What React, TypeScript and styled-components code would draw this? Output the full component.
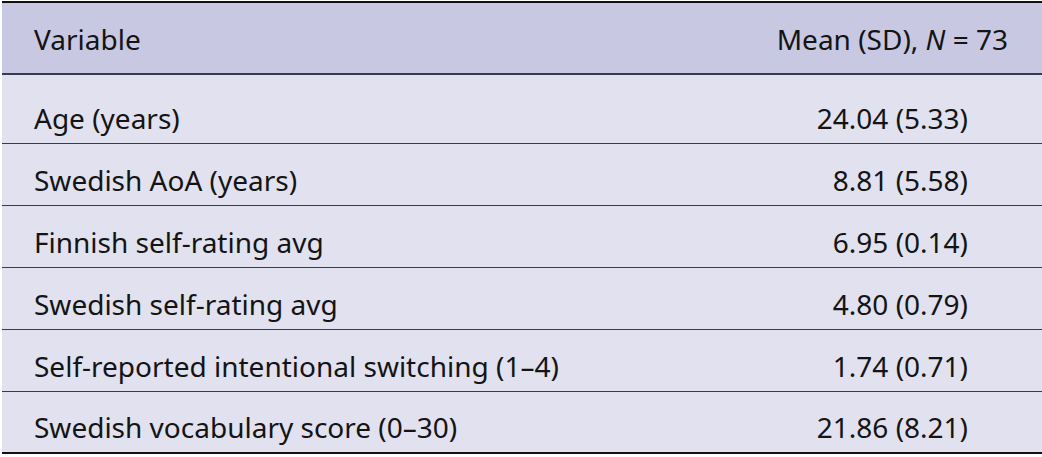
import React from "react";
import styled, { createGlobalStyle } from "styled-components";

const Global = createGlobalStyle`
  html, body { margin: 0; padding: 0; background: #ffffff; }
  body { font-family: "Noto Sans", "Open Sans", sans-serif; }
`;

const Wrap = styled.div`
  padding: 1px 0 0 2px;
`;

const Table = styled.table`
  width: 1040px;
  border-collapse: collapse;
  border-top: 2px solid #111111;
  border-bottom: 2px solid #111111;
  font-family: "Noto Sans", "Open Sans", sans-serif;
  font-size: 28px;
  color: #141414;
`;

const HeadRow = styled.tr`
  background: #c8c8e2;
  border-bottom: 2px solid #3a3a4c;
  height: 72px;
`;

const BodyRow = styled.tr<{ $first?: boolean }>`
  background: #e1e1ef;
  border-top: ${(p) => (p.$first ? "none" : "1px solid #3a3a48")};
  height: ${(p) => (p.$first ? "69px" : "62px")};
`;

const Cell = styled.td<{ $right?: boolean; $head?: boolean }>`
  padding: 0 ${(p) => (p.$right ? (p.$head ? "34px" : "74px") : "0")} ${(p) =>
      p.$head ? "15px" : "6px"} 32px;
  text-align: ${(p) => (p.$right ? "right" : "left")};
  vertical-align: bottom;
  font-weight: 400;
  line-height: 38px;
  white-space: nowrap;
`;

const rows: [string, string][] = [
  ["Age (years)", "24.04 (5.33)"],
  ["Swedish AoA (years)", "8.81 (5.58)"],
  ["Finnish self-rating avg", "6.95 (0.14)"],
  ["Swedish self-rating avg", "4.80 (0.79)"],
  ["Self-reported intentional switching (1\u20134)", "1.74 (0.71)"],
  ["Swedish vocabulary score (0\u201330)", "21.86 (8.21)"],
];

export default function App() {
  return (
    <>
      <Global />
      <Wrap>
        <Table>
          <thead>
            <HeadRow>
              <Cell as="th" $head>Variable</Cell>
              <Cell as="th" $head $right>
                Mean (SD), <i>N</i> = 73
              </Cell>
            </HeadRow>
          </thead>
          <tbody>
            {rows.map(([k, v], i) => (
              <BodyRow key={k} $first={i === 0}>
                <Cell>{k}</Cell>
                <Cell $right>{v}</Cell>
              </BodyRow>
            ))}
          </tbody>
        </Table>
      </Wrap>
    </>
  );
}
